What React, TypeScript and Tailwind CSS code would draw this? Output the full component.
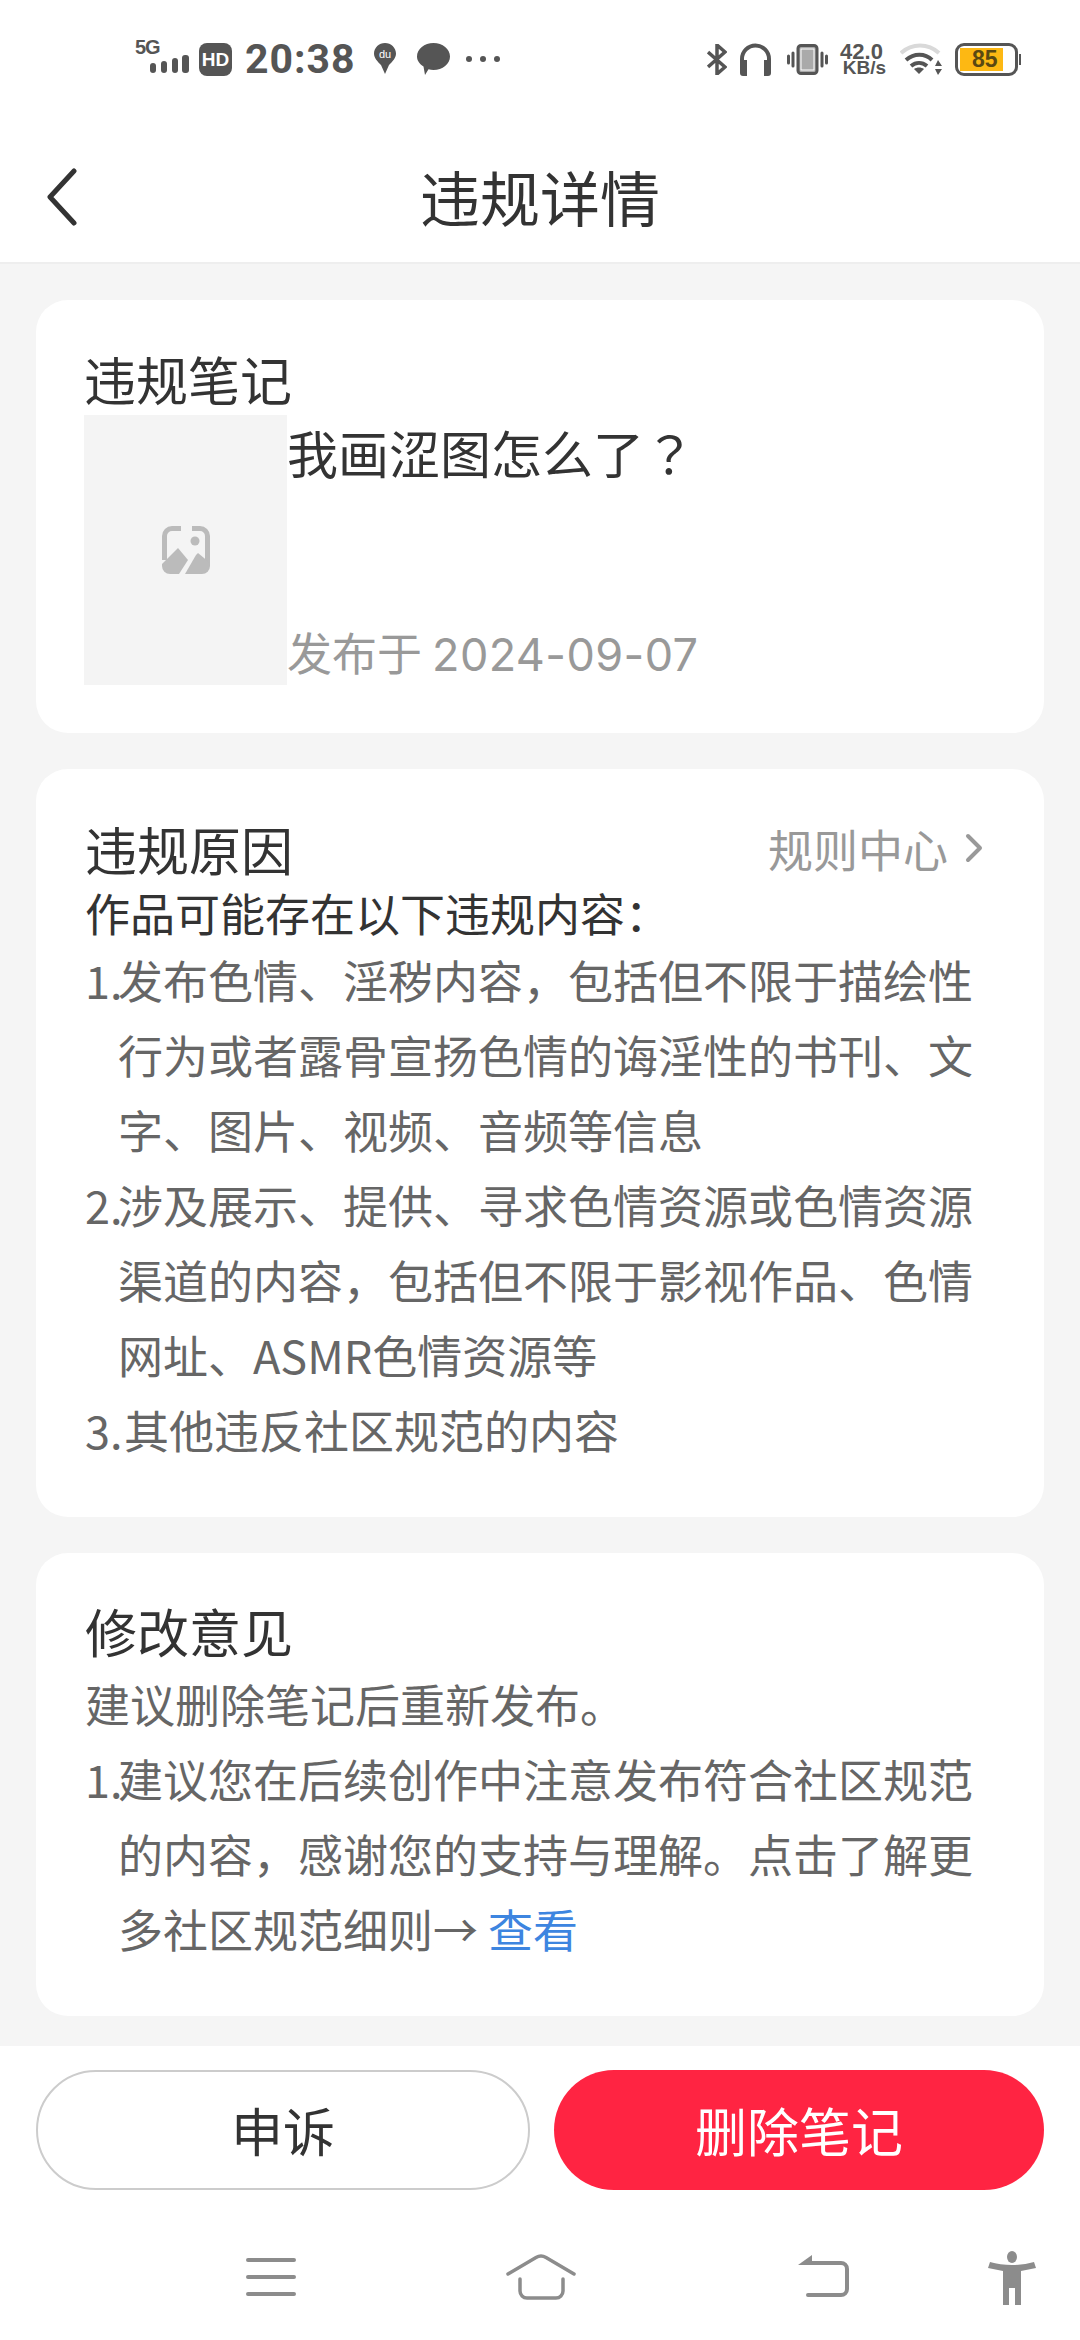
import React from 'react';

const CJK = "font-['Noto_Sans_CJK_SC','Noto_Sans',sans-serif]";

const SignalIcon = () => (
    <div className="flex flex-col items-start w-[56px] h-[36px] relative">
        <span className="text-[20px] leading-[16px] font-bold text-[#555] font-['Liberation_Sans',sans-serif] -mt-[2px] tracking-[-1px]">5G</span>
        <svg width="42" height="20" viewBox="0 0 42 20" className="absolute left-[15px] top-[14px]" fill="#555">
            <rect x="0" y="8" width="6" height="10" rx="3" />
            <rect x="11" y="6" width="6" height="12" rx="3" />
            <rect x="22" y="3" width="6" height="15" rx="3" />
            <rect x="32" y="0" width="7" height="18" rx="3" />
        </svg>
    </div>
);

const StatusBar = () => (
    <div className="h-[90px] shrink-0 flex items-center pl-[135px] pt-[28px] text-[#555]">
        <SignalIcon />
        <div className="ml-[8px] w-[33px] h-[33px] rounded-[8px] bg-[#555] flex items-center justify-center text-white text-[19px] font-bold leading-none font-['Liberation_Sans',sans-serif]">
            HD
        </div>
        <span className="ml-[13px] w-[110px] text-[41px] leading-none font-bold font-['Roboto',sans-serif] tracking-[1px]">20:38</span>
        <svg className="ml-[19px]" width="22" height="32" viewBox="0 0 22 32">
            <path d="M11 0C5 0 0 4.800 0 10.500c0 4.800 3.600 8 7 11.500l4 9 4-9c3.400-3.500 7-6.700 7-11.500C22 4.800 17 0 11 0z" fill="#555" />
            <text x="11" y="15" textAnchor="middle" fontSize="11" fill="#fff" fontFamily="Liberation Sans">du</text>
        </svg>
        <svg className="ml-[21px]" width="33" height="32" viewBox="0 0 33 32" fill="#555">
            <path d="M16.500 0C25.600 0 33 6 33 13.500S25.600 27 16.500 27c-1.800 0-3.400-.2-5-.7L8 32l-1.500-8.500C2.500 21 0 17.500 0 13.500 0 6 7.400 0 16.500 0z" />
        </svg>
        <div className="ml-[16px] flex gap-[8px]">
            <span className="w-[6px] h-[6px] rounded-full bg-[#555]" />
            <span className="w-[6px] h-[6px] rounded-full bg-[#555]" />
            <span className="w-[6px] h-[6px] rounded-full bg-[#555]" />
        </div>

        <svg className="ml-[207px]" width="20" height="31" viewBox="0 0 20 31" fill="none" stroke="#555" strokeWidth="3.500">
            <path d="M1 8l17 15-8 7V1l8 7L1 23" />
        </svg>
        <svg className="ml-[12px]" width="33" height="33" viewBox="0 0 33 33">
            <path d="M3 20v-4a13.500 13.500 0 0 1 27 0v4" fill="none" stroke="#555" strokeWidth="4" />
            <path d="M1 20a3 3 0 0 1 3-3h4v16H4a3 3 0 0 1-3-3zM32 20a3 3 0 0 0-3-3h-4v16h4a3 3 0 0 0 3-3z" fill="#555" />
        </svg>
        <svg className="ml-[15px]" width="41" height="31" viewBox="0 0 41 31">
            <rect x="11" y="1.500" width="19" height="28" rx="3" fill="#aaa" stroke="#555" strokeWidth="3" />
            <rect x="14" y="5" width="13" height="21" fill="#aaa" stroke="#fff" strokeWidth="1" />
            <path d="M6 9v13M35 9v13" stroke="#555" strokeWidth="3" strokeLinecap="round" />
            <path d="M1.500 12v7M39.500 12v7" stroke="#555" strokeWidth="3" strokeLinecap="round" />
        </svg>
        <div className="ml-[10px] w-[50px] flex flex-col items-center font-bold font-['Liberation_Sans',sans-serif] leading-none">
            <span className="text-[22px] leading-[17px] -ml-[3px]">42.0</span>
            <span className="text-[19px] leading-[16px] ml-[3px]">KB/s</span>
        </div>
        <svg className="ml-[12px]" width="42" height="32" viewBox="0 0 42 32" fill="none">
            <path d="M1 10C12 0 28 0 39 10" stroke="#d9d9d9" strokeWidth="4" />
            <path d="M6 17C14 10 25 10 32 17" stroke="#555" strokeWidth="4" />
            <path d="M11 23C16 19 22 19 27 23" stroke="#555" strokeWidth="4" />
            <path d="M19 31l-5-5c3-2 7-2 10 0z" fill="#555" />
            <path d="M38 17l4 6h-7zM38 32l4-6h-7z" fill="#555" />
        </svg>
        <div className="ml-[13px] flex items-center">
            <div className="w-[63px] h-[33px] rounded-[9px] border-[3px] border-[#555] p-[2px] relative">
                <div className="h-full w-[43px] bg-[#fdb813]" />
                <span className="absolute inset-0 pl-[14px] flex items-center text-[23px] font-bold text-[#5a4812] font-['Liberation_Sans',sans-serif]">85</span>
            </div>
            <div className="ml-[1px] w-[2px] h-[11px] bg-[#555]" />
        </div>
    </div>
);

const ListItem: React.FC<{ num: string; numWidth: string; children: React.ReactNode }> = ({ num, numWidth, children }) => (
    <div className="flex">
        <span className={`shrink-0 ${numWidth}`}>{num}</span>
        <p className="flex-1">{children}</p>
    </div>
);

const PlaceholderIcon = () => (
    <svg width="48" height="48" viewBox="0 0 48 48" fill="#bbb">
        <path d="M19 2.500H10A7.500 7.500 0 0 0 2.500 10v24" fill="none" stroke="#bbb" strokeWidth="5" />
        <path d="M30 2.500h8a7.500 7.500 0 0 1 7.500 7.500v28" fill="none" stroke="#bbb" strokeWidth="5" />
        <circle cx="33" cy="15" r="4.500" />
        <path d="M16 22L0 38v2a8 8 0 0 0 8 8h9l9-14z" />
        <path d="M34 29l2-2 12 10v3a8 8 0 0 1-8 8H23z" />
    </svg>
);

const App: React.FC = () => {
    return (
        <div className={`w-[1080px] h-[2340px] bg-white flex flex-col overflow-hidden ${CJK}`}>
            <StatusBar />

            {/* Title bar */}
            <div className="h-[174px] shrink-0 bg-white border-b-[2px] border-[#eeeeee] pt-[40px] grid grid-cols-[1fr_auto_1fr] items-center">
                <div className="pl-[46px] pt-[2px]">
                    <svg width="32" height="58" viewBox="0 0 32 58" fill="none" stroke="#333" strokeWidth="5" strokeLinecap="round" strokeLinejoin="round">
                        <path d="M28 3L4 29l24 26" />
                    </svg>
                </div>
                <h1 className="text-[60px] leading-none text-[#333] font-normal">违规详情</h1>
                <div />
            </div>

            <main className="flex-1 bg-[#f5f5f5] px-[36px] pt-[36px] flex flex-col gap-[36px]">
                {/* Note card */}
                <section className="h-[433px] bg-white rounded-[32px] pl-[48px] pt-[44px]">
                    <h2 className="text-[52px] leading-[70px] text-[#333] font-normal mb-[1px]">违规笔记</h2>
                    <div className="flex h-[270px]">
                        <div className="w-[203px] h-full bg-[#f4f4f4] flex items-center justify-center">
                            <PlaceholderIcon />
                        </div>
                        <div className="flex flex-col justify-between">
                            <p className="text-[51px] leading-[75px] text-[#333]">
                                我画涩图怎么了<span className="font-['Noto_Sans_CJK_TC',sans-serif]">？</span>
                            </p>
                            <p className="text-[45px] leading-[60px] text-[#999]">
                                发布于 <span className="font-['Inter',sans-serif] tracking-[0.4px]">2024-09-07</span>
                            </p>
                        </div>
                    </div>
                </section>

                {/* Reason card */}
                <section className="h-[748px] bg-white rounded-[32px] pl-[49px] pr-[49px] pt-[45px]">
                    <div className="flex items-center justify-between h-[70px]">
                        <h2 className="text-[52px] leading-[70px] text-[#333] font-normal">违规原因</h2>
                        <div className="flex items-center text-[45px] text-[#999] leading-none -mt-[2px]">
                            规则中心
                            <svg className="ml-[17px] mr-[12px]" width="18" height="30" viewBox="0 0 18 30" fill="none" stroke="#999" strokeWidth="4" strokeLinecap="round" strokeLinejoin="round">
                                <path d="M3 3l12 12L3 27" />
                            </svg>
                        </div>
                    </div>
                    <p className="text-[45px] leading-[58px] text-[#333]">作品可能存在以下违规内容：</p>
                    <div className="text-[45px] leading-[75px] text-[#666]">
                        <ListItem num="1." numWidth="w-[33px]">发布色情、淫秽内容，包括但不限于描绘性行为或者露骨宣扬色情的诲淫性的书刊、文字、图片、视频、音频等信息</ListItem>
                        <ListItem num="2." numWidth="w-[33px]">涉及展示、提供、寻求色情资源或色情资源渠道的内容，包括但不限于影视作品、色情网址、ASMR色情资源等</ListItem>
                        <ListItem num="3." numWidth="w-[39px]">其他违反社区规范的内容</ListItem>
                    </div>
                </section>

                {/* Suggestion card */}
                <section className="h-[463px] bg-white rounded-[32px] pl-[49px] pr-[49px] pt-[43px]">
                    <h2 className="text-[52px] leading-[70px] text-[#333] font-normal">修改意见</h2>
                    <div className="text-[45px] leading-[75px] text-[#666]">
                        <p>建议删除笔记后重新发布。</p>
                        <ListItem num="1." numWidth="w-[33px]">
                            建议您在后续创作中注意发布符合社区规范的内容，感谢您的支持与理解。点击了解更多社区规范细则→ <span className="text-[#3d85e0]">查看</span>
                        </ListItem>
                    </div>
                </section>
            </main>

            {/* Action buttons */}
            <div className="shrink-0 bg-white px-[36px] pt-[24px] flex gap-[24px]">
                <button className="flex-1 h-[120px] rounded-full border-[2px] border-[#cccccc] bg-white text-[52px] text-[#333]">申诉</button>
                <button className="flex-1 h-[120px] rounded-full bg-[#ff2442] text-[52px] text-white">删除笔记</button>
            </div>

            {/* System navigation */}
            <div className="h-[150px] shrink-0 bg-white flex items-start pt-[67px] pl-[246px]">
                <svg width="50" height="40" viewBox="0 0 50 40" fill="none" stroke="#8c8c8c" strokeWidth="4" strokeLinecap="round">
                    <path d="M2 3h46M2 20h46M2 37h46" />
                </svg>
                <svg className="ml-[210px] -mt-[3px]" width="70" height="46" viewBox="0 0 70 46" fill="none" stroke="#8c8c8c" strokeWidth="3.500" strokeLinecap="round" strokeLinejoin="round">
                    <path d="M2 20L30 3.500c3-1.800 7-1.800 10 0L68 20" />
                    <path d="M14 25v12a7 7 0 0 0 7 7h29a7 7 0 0 0 7-7V25" />
                </svg>
                <svg className="ml-[222px] -mt-[2px]" width="52" height="44" viewBox="0 0 52 44" fill="none">
                    <path d="M14 8h29a6 6 0 0 1 6 6v20a6 6 0 0 1-6 6H10" stroke="#8c8c8c" strokeWidth="4" strokeLinecap="round" strokeLinejoin="round" />
                    <path d="M0 10L14 0v10z" fill="#8c8c8c" />
                </svg>
                <svg className="ml-[138px] -mt-[6px]" width="48" height="54" viewBox="0 0 48 54" fill="#8c8c8c">
                    <ellipse cx="24" cy="6" rx="5" ry="6" />
                    <path d="M2 11c13 4 31 4 44 0l2 6-15 3v34h-6V37h-6v17h-6V20L0 17z" />
                </svg>
            </div>
        </div>
    );
};

export default App;
